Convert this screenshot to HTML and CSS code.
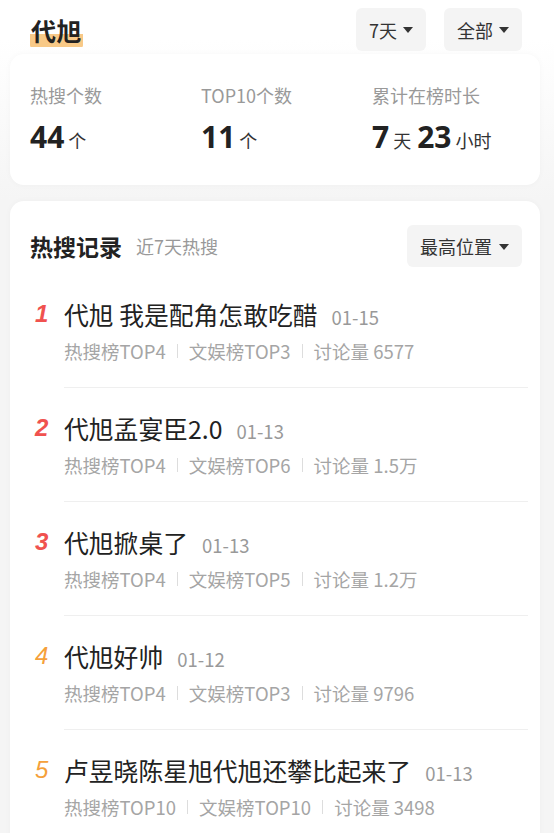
FILE: index.html
```html
<!DOCTYPE html>
<html lang="zh">
<head>
<meta charset="utf-8">
<link rel="stylesheet" href="styles.css">
</head>
<body>
<div class="page">
  <header class="top">
    <h1 class="name"><span class="name-text">代旭</span></h1>
    <div class="filters">
      <button class="chip chip-days">7天<i class="caret"></i></button>
      <button class="chip chip-all">全部<i class="caret"></i></button>
    </div>
  </header>

  <section class="card stats">
    <div class="stat">
      <div class="stat-label">热搜个数</div>
      <div class="stat-value"><b>44</b><span>个</span></div>
    </div>
    <div class="stat">
      <div class="stat-label">TOP10个数</div>
      <div class="stat-value"><b>11</b><span>个</span></div>
    </div>
    <div class="stat">
      <div class="stat-label">累计在榜时长</div>
      <div class="stat-value"><b>7</b><span>天</span><b>23</b><span>小时</span></div>
    </div>
  </section>

  <section class="card records">
    <div class="records-head">
      <h2 class="records-title">热搜记录</h2>
      <span class="records-sub">近7天热搜</span>
      <button class="chip chip-sort">最高位置<i class="caret"></i></button>
    </div>
    <ul class="list">
      <li class="item">
        <span class="rank rank-top">1</span>
        <div class="body">
          <div class="title-row"><span class="title">代旭 我是配角怎敢吃醋</span><span class="date">01-15</span></div>
          <div class="meta"><span>热搜榜TOP4</span><i class="sep"></i><span>文娱榜TOP3</span><i class="sep"></i><span>讨论量 6577</span></div>
        </div>
      </li>
      <li class="item">
        <span class="rank rank-top">2</span>
        <div class="body">
          <div class="title-row"><span class="title">代旭孟宴臣2.0</span><span class="date">01-13</span></div>
          <div class="meta"><span>热搜榜TOP4</span><i class="sep"></i><span>文娱榜TOP6</span><i class="sep"></i><span>讨论量 1.5万</span></div>
        </div>
      </li>
      <li class="item">
        <span class="rank rank-top">3</span>
        <div class="body">
          <div class="title-row"><span class="title">代旭掀桌了</span><span class="date">01-13</span></div>
          <div class="meta"><span>热搜榜TOP4</span><i class="sep"></i><span>文娱榜TOP5</span><i class="sep"></i><span>讨论量 1.2万</span></div>
        </div>
      </li>
      <li class="item">
        <span class="rank rank-mid">4</span>
        <div class="body">
          <div class="title-row"><span class="title">代旭好帅</span><span class="date">01-12</span></div>
          <div class="meta"><span>热搜榜TOP4</span><i class="sep"></i><span>文娱榜TOP3</span><i class="sep"></i><span>讨论量 9796</span></div>
        </div>
      </li>
      <li class="item">
        <span class="rank rank-mid">5</span>
        <div class="body">
          <div class="title-row"><span class="title">卢昱晓陈星旭代旭还攀比起来了</span><span class="date">01-13</span></div>
          <div class="meta"><span>热搜榜TOP10</span><i class="sep"></i><span>文娱榜TOP10</span><i class="sep"></i><span>讨论量 3498</span></div>
        </div>
      </li>
    </ul>
  </section>
</div>
</body>
</html>
```

FILE: styles.css
```css
* { box-sizing: border-box; }
html, body { margin: 0; padding: 0; }
body {
  font-family: "Noto Sans CJK SC", "Noto Sans", sans-serif;
  color: #222;
  background: linear-gradient(#ffffff 0px, #ffffff 40px, #f5f5f5 200px, #f5f5f5 100%);
  width: 554px;
  height: 833px;
  overflow: hidden;
}
.page { padding: 8px 14px 0 10px; }

.top {
  display: flex;
  align-items: center;
  justify-content: space-between;
  height: 43px;
  padding-left: 20px;
  padding-right: 18px;
}
.name { margin: 0; font-size: 25px; font-weight: 700; line-height: 32px; }
.name-text {
  background: linear-gradient(transparent 60%, #f8c987 60%, #f8c987 96%, transparent 96%);
  border-radius: 3px;
  padding: 0 1px;
  letter-spacing: 0.5px;
}
.filters { display: flex; gap: 18px; }
.chip {
  display: inline-flex;
  align-items: center;
  justify-content: center;
  height: 43px;
  border: 0;
  border-radius: 6px;
  background: #f4f4f4;
  font-family: inherit;
  font-size: 18px;
  color: #333;
  padding: 0;
  gap: 6px;
  white-space: nowrap;
}
.chip-days { width: 70px; }
.chip-all { width: 78px; }
.caret {
  display: inline-block;
  flex: none;
  width: 0; height: 0;
  border-left: 5px solid transparent;
  border-right: 5px solid transparent;
  border-top: 6px solid #333;
  margin-top: 1px;
}

.card {
  background: #fff;
  border-radius: 14px;
  box-shadow: 0 0 6px rgba(0,0,0,0.03);
}
.stats {
  margin-top: 3px;
  display: grid;
  grid-template-columns: 171px 171px 1fr;
  padding: 28px 0 0 20px;
  height: 131px;
}
.stat-label { font-size: 18px; line-height: 26px; color: #999; }
.stat-value {
  margin-top: 9px;
  line-height: 40px;
  display: flex;
  align-items: baseline;
}
.stat-value b { font-size: 30px; font-weight: 700; color: #222; font-family: "Noto Sans", "Noto Sans CJK SC", sans-serif; }
.stat-value span { font-size: 18px; color: #333; margin: 0 6px 0 4px; }

.records {
  margin-top: 16px;
  padding: 24px 12px 0 20px;
  height: 700px;
}
.records-head {
  display: flex;
  align-items: center;
  padding-right: 6px;
}
.records-title { margin: 0; font-size: 23px; font-weight: 700; line-height: 30px; }
.records-sub { font-size: 18px; color: #999; margin-left: 14px; }
.chip-sort { margin-left: auto; height: 42px; width: 115px; gap: 7px; }

.list { list-style: none; margin: 7px 0 0 0; padding: 0; }
.item {
  display: flex;
  align-items: flex-start;
}
.rank {
  width: 34px;
  padding-left: 5px;
  padding-top: 24px;
  font-size: 24px;
  line-height: 32px;
  font-style: italic;
  font-family: "Liberation Sans", "DejaVu Sans", sans-serif;
}
.rank-top { color: #f0524f; font-weight: 700; }
.rank-mid { color: #f5a03a; font-weight: 400; }
.body {
  flex: 1;
  padding: 24px 0 23px 0;
  border-bottom: 1px solid #efefef;
}
.title-row { display: flex; align-items: baseline; height: 32px; line-height: 32px; white-space: nowrap; }
.title { font-size: 24.8px; color: #222; }
.date { font-size: 18.5px; color: #999; margin-left: 14px; }
.meta {
  margin-top: 8px;
  display: flex;
  align-items: center;
  height: 26px;
  font-size: 18.5px;
  line-height: 26px;
  color: #a5a5a5;
  white-space: nowrap;
}
.sep {
  display: inline-block;
  width: 1px;
  height: 14px;
  background: #ddd;
  margin: 0 11px;
}
```
